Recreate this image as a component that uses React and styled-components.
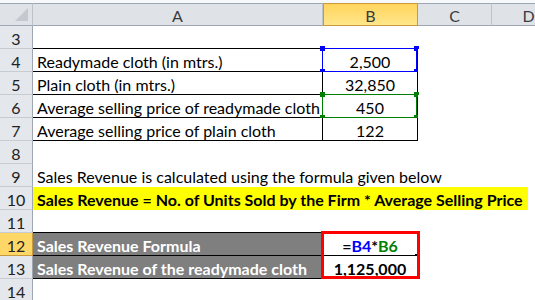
import React from 'react'
import styled, { createGlobalStyle, css } from 'styled-components'

const GlobalStyle = createGlobalStyle`
  html, body {
    margin: 0;
    padding: 0;
    background: #fff;
  }
  body {
    font-family: Lato, 'Liberation Sans', sans-serif;
  }
`

const Sheet = styled.div`
  width: 535px;
  height: 300px;
  overflow: hidden;
  padding-top: 3px;
  box-sizing: border-box;
  background: #f7f8f9;
  display: grid;
  grid-template-columns: 33px 290px 95px 74px 74px;
  grid-auto-rows: 23px;
  font-size: 16px;
  color: #000;
`

const ColHead = styled.div`
  box-sizing: border-box;
  background: #dfe3e8;
  border-top: 1px solid #9ea7b1;
  border-bottom: 1px solid #9ea7b1;
  border-right: 1px solid #bcc3cb;
  display: flex;
  align-items: center;
  justify-content: center;
  padding-top: 1px;
  color: #3b3b3b;
  ${(p) =>
    p.$active &&
    css`
      background: linear-gradient(#ffd45c, #ffe78c);
      border: 1px solid #c9993e;
      border-bottom-color: #c9993e;
    `}
`

const Corner = styled(ColHead)`
  position: relative;
  &::after {
    content: '';
    position: absolute;
    right: 4px;
    bottom: 4px;
    border-style: solid;
    border-width: 0 0 13px 13px;
    border-color: transparent transparent #c4c9cf transparent;
  }
`

const RowHead = styled.div`
  box-sizing: border-box;
  background: #e4e7eb;
  border-right: 1px solid #9ea7b1;
  border-bottom: 1px solid #c7ccd3;
  display: flex;
  align-items: center;
  justify-content: center;
  padding-top: 2px;
  color: #222;
  ${(p) =>
    p.$active &&
    css`
      background: #ffd766;
      border-right-color: #c9993e;
      border-bottom-color: #c9993e;
    `}
`

const Cell = styled.div`
  position: relative;
  box-sizing: border-box;
  background: ${(p) => p.$bg || '#fff'};
  color: ${(p) => p.$color || '#000'};
  font-weight: ${(p) => (p.$bold ? 700 : 400)};
  border-bottom: 1px solid ${(p) => (p.$bottom ? '#000' : 'transparent')};
  border-right: 1px solid ${(p) => (p.$right ? '#000' : 'transparent')};
  grid-column: span ${(p) => p.$span || 1};
  display: flex;
  align-items: center;
  justify-content: ${(p) => (p.$center ? 'center' : 'flex-start')};
  padding: 2px 0 0 ${(p) => (p.$center ? 0 : 4)}px;
  white-space: nowrap;
  overflow: visible;
`

const Highlight = styled.span`
  align-self: stretch;
  display: flex;
  align-items: center;
  background: #ffff00;
  font-weight: 700;
  margin: -2px 0 -1px -4px;
  padding: 2px 5px 0 4px;
`

const RangeBox = styled.div`
  position: absolute;
  top: -1px;
  left: -1px;
  right: 0;
  bottom: -1px;
  border: 1px solid ${(p) => p.$color};
  pointer-events: none;
`

const Handle = styled.span`
  position: absolute;
  width: 5px;
  height: 5px;
  background: ${(p) => p.$color};
  ${(p) => (p.$top ? 'top: -3px;' : 'bottom: -3px;')}
  ${(p) => (p.$left ? 'left: -3px;' : 'right: -3px;')}
`

const RedBox = styled.div`
  position: absolute;
  top: -2px;
  left: -2px;
  width: 99px;
  height: 48px;
  box-sizing: border-box;
  border: 3px solid #ff0000;
  pointer-events: none;
  z-index: 2;
`

const FillDot = styled.span`
  position: absolute;
  right: -1px;
  bottom: -2px;
  width: 3px;
  height: 3px;
  background: #000;
`

const Ref = styled.span`
  color: ${(p) => p.$color};
`

const Range = ({ color }) => (
  <RangeBox $color={color}>
    <Handle $color={color} $top $left />
    <Handle $color={color} $top />
    <Handle $color={color} $left />
    <Handle $color={color} />
  </RangeBox>
)

const Empty = ({ n, active }) => (
  <>
    <RowHead $active={active}>{n}</RowHead>
    <Cell />
    <Cell />
    <Cell />
    <Cell />
  </>
)

const data = [
  { n: 4, label: 'Readymade cloth (in mtrs.)', value: '2,500', range: '#0000ff' },
  { n: 5, label: 'Plain cloth (in mtrs.)', value: '32,850' },
  { n: 6, label: 'Average selling price of readymade cloth', value: '450', range: '#008000' },
  { n: 7, label: 'Average selling price of plain cloth', value: '122' },
]

export default function App() {
  return (
    <>
      <GlobalStyle />
      <Sheet>
        <Corner />
        <ColHead>A</ColHead>
        <ColHead $active>B</ColHead>
        <ColHead>C</ColHead>
        <ColHead>D</ColHead>

        <RowHead>3</RowHead>
        <Cell $bottom />
        <Cell $bottom />
        <Cell />
        <Cell />

        {data.map((row) => (
          <React.Fragment key={row.n}>
            <RowHead>{row.n}</RowHead>
            <Cell $bottom $right>{row.label}</Cell>
            <Cell $bottom $right $center>
              {row.value}
              {row.range && <Range color={row.range} />}
            </Cell>
            <Cell />
            <Cell />
          </React.Fragment>
        ))}

        <Empty n={8} />

        <RowHead>9</RowHead>
        <Cell $span={4}>Sales Revenue is calculated using the formula given below</Cell>

        <RowHead>10</RowHead>
        <Cell $span={4}>
          <Highlight>Sales Revenue = No. of Units Sold by the Firm * Average Selling Price</Highlight>
        </Cell>

        <RowHead>11</RowHead>
        <Cell $bottom />
        <Cell $bottom />
        <Cell />
        <Cell />

        <RowHead $active>12</RowHead>
        <Cell $bg="#7f7f7f" $color="#fff" $bold $bottom $right>
          Sales Revenue Formula
        </Cell>
        <Cell $bold $center $bottom $right>
          =<Ref $color="#0000ff">B4</Ref>*<Ref $color="#008000">B6</Ref>
          <FillDot />
          <RedBox />
        </Cell>
        <Cell />
        <Cell />

        <RowHead>13</RowHead>
        <Cell $bg="#7f7f7f" $color="#fff" $bold $bottom $right>
          Sales Revenue of the readymade cloth
        </Cell>
        <Cell $bold $center $bottom $right>
          1,125,000
        </Cell>
        <Cell />
        <Cell />

        <Empty n={14} />
      </Sheet>
    </>
  )
}
